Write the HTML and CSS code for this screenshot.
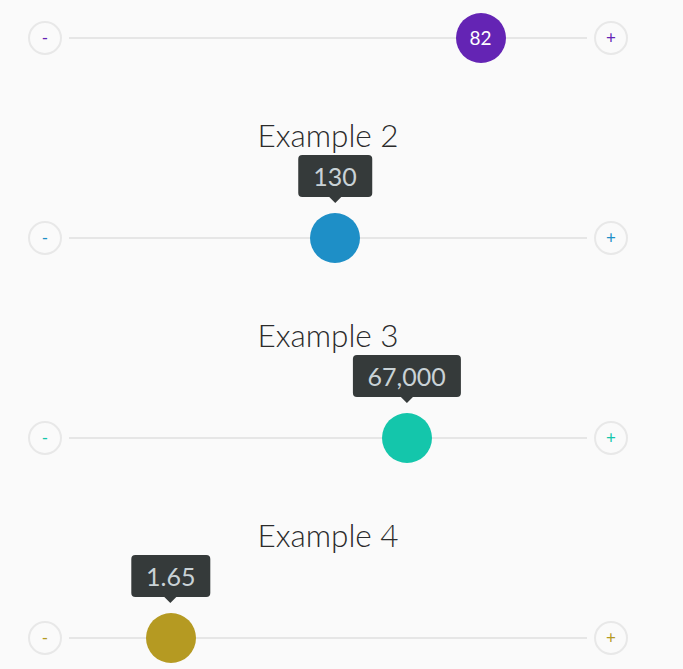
FILE: index.html
```html
<!DOCTYPE html>
<html lang="en">
<head>
    <meta charset="UTF-8">
    <meta name="viewport" content="width=device-width, initial-scale=1.0">
    <title>Sliders</title>
    <link rel="stylesheet" href="styles.css">
</head>
<body>
    <div class="sliders">
        <!-- Example 1 (value shown inside the handle) -->
        <div class="slider-row theme-purple">
            <button class="step">-</button>
            <div class="track">
                <div class="rail">
                    <div class="thumb" style="left: 82.6%">82</div>
                </div>
            </div>
            <button class="step">+</button>
        </div>

        <div class="example">
            <h2>Example 2</h2>
            <div class="slider-row theme-blue">
                <button class="step">-</button>
                <div class="track">
                    <div class="rail">
                        <div class="thumb" style="left: 51.5%">
                            <span class="tip">130</span>
                        </div>
                    </div>
                </div>
                <button class="step">+</button>
            </div>
        </div>

        <div class="example">
            <h2>Example 3</h2>
            <div class="slider-row theme-teal">
                <button class="step">-</button>
                <div class="track">
                    <div class="rail">
                        <div class="thumb" style="left: 66.8%">
                            <span class="tip">67,000</span>
                        </div>
                    </div>
                </div>
                <button class="step">+</button>
            </div>
        </div>

        <div class="example">
            <h2>Example 4</h2>
            <div class="slider-row theme-gold">
                <button class="step">-</button>
                <div class="track">
                    <div class="rail">
                        <div class="thumb" style="left: 16.4%">
                            <span class="tip">1.65</span>
                        </div>
                    </div>
                </div>
                <button class="step">+</button>
            </div>
        </div>
    </div>
</body>
</html>
```

FILE: styles.css
```css
body {
    margin: 0;
    background: #fafafa;
    font-family: Lato, "Open Sans", sans-serif;
    color: #333;
}
.sliders {
    width: 600px;
    margin-left: 28px;
    padding-top: 13px;
}
.example {
    margin-top: 54px;
}
.example h2 {
    margin: 0 0 60px;
    height: 36px;
    line-height: 36px;
    text-align: center;
    font-size: 31.5px;
    font-weight: 300;
    color: #2b2b2b;
}
.slider-row {
    display: flex;
    align-items: center;
    gap: 7px;
    height: 50px;
}
.step {
    width: 34px;
    height: 34px;
    flex: none;
    padding: 0;
    border: 2px solid #e8e8e8;
    border-radius: 50%;
    background: #fafafa;
    color: var(--accent);
    font-family: inherit;
    font-size: 17px;
    line-height: 28px;
}
.track {
    flex: 1;
    height: 2px;
    background: #e6e6e6;
}
.rail {
    position: relative;
    height: 2px;
    margin: 0 25px;
}
.thumb {
    position: absolute;
    top: -24px;
    width: 50px;
    height: 50px;
    margin-left: -25px;
    border-radius: 50%;
    background: var(--accent);
    color: #fff;
    font-size: 19px;
    line-height: 50px;
    text-align: center;
}
.tip {
    position: absolute;
    bottom: 66px;
    left: 50%;
    transform: translateX(-50%);
    padding: 0 15px;
    height: 42px;
    line-height: 42px;
    border-radius: 4px;
    background: #353a3a;
    color: #c9d2d6;
    font-size: 25px;
    white-space: nowrap;
}
.tip::after {
    content: "";
    position: absolute;
    top: 100%;
    left: 50%;
    margin-left: -6px;
    border: 6px solid transparent;
    border-top-color: #353a3a;
}
.theme-purple { --accent: #6424b4; }
.theme-blue { --accent: #1e8fc7; }
.theme-teal { --accent: #14c6ab; }
.theme-gold { --accent: #b59a22; }
```
